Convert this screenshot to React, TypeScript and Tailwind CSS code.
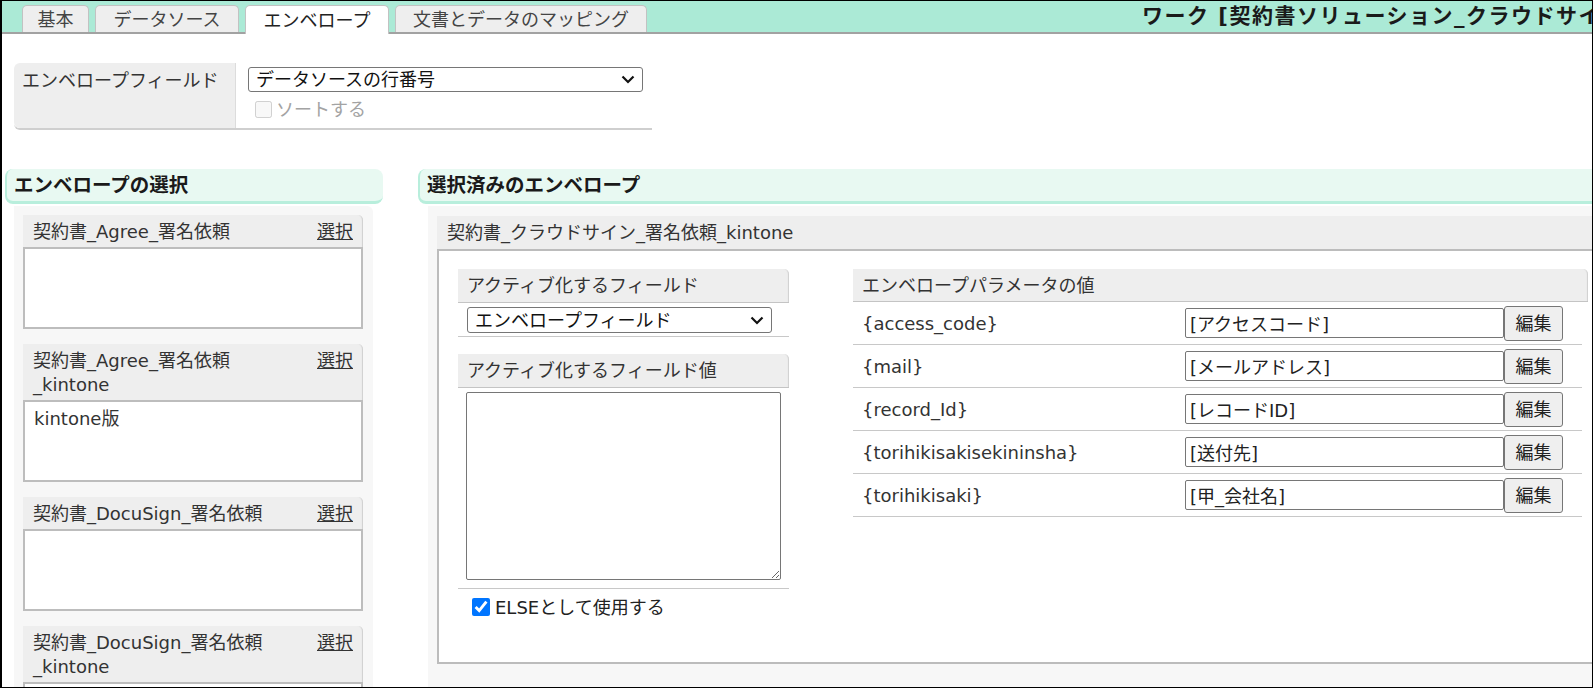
import React from 'react';

const tabs = [
  { label: '基本', width: 'w-[67px]', active: false },
  { label: 'データソース', width: 'w-[144px]', active: false },
  { label: 'エンベロープ', width: 'w-[144px]', active: true },
  { label: '文書とデータのマッピング', width: 'w-[252px]', active: false },
];

const envelopes = [
  { name: '契約書_Agree_署名依頼', note: '' },
  { name: '契約書_Agree_署名依頼_kintone', note: 'kintone版' },
  { name: '契約書_DocuSign_署名依頼', note: '' },
  { name: '契約書_DocuSign_署名依頼_kintone', note: '' },
];

const params = [
  { key: '{access_code}', value: '[アクセスコード]' },
  { key: '{mail}', value: '[メールアドレス]' },
  { key: '{record_Id}', value: '[レコードID]' },
  { key: '{torihikisakisekininsha}', value: '[送付先]' },
  { key: '{torihikisaki}', value: '[甲_会社名]' },
];

const Chevron = () => (
  <svg width="14" height="9" viewBox="0 0 14 9" className="shrink-0">
    <path d="M1.5 1.5 L7 7 L12.5 1.5" fill="none" stroke="#111" strokeWidth="2.2" />
  </svg>
);

const FakeSelect = ({ value, className }: { value: string; className: string }) => (
  <div
    className={`flex items-center justify-between bg-white border border-[#767676] rounded-[3px] pl-[7px] pr-[7px] text-[#111] ${className}`}
  >
    <span className="whitespace-nowrap">{value}</span>
    <Chevron />
  </div>
);

const SectionHeader = ({ title }: { title: string }) => (
  <div className="h-[35px] flex items-center bg-[#e8f9f2] border-l-2 border-b-[3px] border-[#b8eedc] rounded-[8px] pl-[7px] text-[19.5px] font-bold text-[#1a1a1a] whitespace-nowrap">
    {title}
  </div>
);

const SubHeader = ({ title, className = '' }: { title: string; className?: string }) => (
  <div
    className={`flex items-center bg-[#eeeeee] rounded-tr-[5px] border-b border-[#c4c4c4] pl-[9px] shadow-[inset_-2px_0_1px_-1px_#cfcfcf] ${className}`}
  >
    {title}
  </div>
);

export default function App() {
  return (
    <div className="w-[1593px] h-[688px] overflow-hidden bg-white border border-l-2 border-black text-[18px] leading-[25px] text-[#333] font-['DejaVu_Sans','Noto_Sans_CJK_JP',sans-serif]">
      <div className="w-[1700px]">
        {/* tab bar */}
        <div className="h-[33px] flex items-end gap-[6px] pl-[20px] bg-[#abead6] border-b-2 border-[#a2a2a2]">
          {tabs.map((t) => (
            <div
              key={t.label}
              className={`${t.width} flex items-center justify-center rounded-t-[5px] border border-b-0 border-[#c2c2c2] whitespace-nowrap ${
                t.active ? 'h-[29px] -mb-[2px] bg-white text-[#222] relative' : 'h-[27px] bg-[#eeeeee] text-[#444]'
              }`}
            >
              {t.label}
            </div>
          ))}
          <div className="self-center ml-[489px] text-[21px] tracking-[1.5px] font-bold text-[#1a1a1a] whitespace-nowrap">
            ワーク [契約書ソリューション_クラウドサイン]
          </div>
        </div>

        {/* envelope field */}
        <div className="mt-[29px] ml-[12px] w-[638px] flex border-b-2 border-[#cfcfcf] rounded-bl-[6px]">
          <div className="w-[222px] shrink-0 bg-[#eeeeee] rounded-l-[6px] border-r border-[#dcdcdc] px-[8px] pt-[5px]">
            エンベロープフィールド
          </div>
          <div className="flex-1 pl-[12px] pt-[4px] pb-[6px]">
            <FakeSelect value="データソースの行番号" className="w-[395px] h-[25px]" />
            <label className="flex items-center gap-[4px] mt-[5px] ml-[7px] text-[#a3a3a3]">
              <input type="checkbox" disabled className="w-[17px] h-[17px] m-0" />
              ソートする
            </label>
          </div>
        </div>

        {/* sections */}
        <div className="mt-[39px] flex">
          {/* left: envelope list */}
          <div className="ml-[3px] w-[378px] shrink-0">
            <SectionHeader title="エンベロープの選択" />
            <div className="mt-[2px] ml-[9px] w-[359px] bg-[#f7f7f7] rounded-tr-[6px] pt-[9px] pl-[9px] pr-[10px] pb-[40px] flex flex-col gap-[15px]">
              {envelopes.map((e) => (
                <div key={e.name}>
                  <div className="flex items-start justify-between gap-[8px] bg-[#eeeeee] rounded-tr-[5px] pl-[10px] pr-[10px] pt-[5px] pb-[3px] leading-[24px] shadow-[inset_-2px_0_1px_-1px_#cfcfcf]">
                    <span className="w-[250px]">{e.name}</span>
                    <span className="underline whitespace-nowrap">選択</span>
                  </div>
                  <div className="h-[82px] bg-white border-2 border-[#bdbdbd] px-[9px] pt-[4px]">{e.note}</div>
                </div>
              ))}
            </div>
          </div>

          {/* right: selected envelope */}
          <div className="ml-[35px] flex-1">
            <SectionHeader title="選択済みのエンベロープ" />
            <div className="mt-[2px] ml-[10px] bg-[#f7f7f7] pt-[10px] pl-[9px] pb-[40px]">
              <div className="h-[33px] flex items-center bg-[#eeeeee] pl-[10px] whitespace-nowrap">
                契約書_クラウドサイン_署名依頼_kintone
              </div>
              <div className="h-[415px] bg-white border-2 border-[#bcbcbc] pt-[18px] pl-[19px] flex gap-[64px]">
                {/* activation field */}
                <div className="w-[331px] shrink-0">
                  <SubHeader title="アクティブ化するフィールド" className="h-[34px]" />
                  <div className="pt-[4px] pb-[3px] pl-[9px] border-b border-[#c8c8c8]">
                    <FakeSelect value="エンベロープフィールド" className="w-[305px] h-[26px]" />
                  </div>
                  <SubHeader title="アクティブ化するフィールド値" className="mt-[17px] h-[34px]" />
                  <div className="pt-[4px] pb-[8px] pl-[8px] border-b border-[#c8c8c8]">
                    <textarea className="block w-[315px] h-[188px] bg-white border border-[#767676] rounded-[2px]" />
                  </div>
                  <label className="h-[36px] flex items-center gap-[5px] pl-[14px] text-[#222]">
                    <input type="checkbox" defaultChecked className="w-[18px] h-[18px] m-0 accent-[#0075ff]" />
                    ELSEとして使用する
                  </label>
                </div>

                {/* parameters */}
                <div className="w-[735px] shrink-0">
                  <SubHeader title="エンベロープパラメータの値" className="h-[33px]" />
                  <div className="mr-[6px]">
                    {params.map((p) => (
                      <div key={p.key} className="h-[43px] flex items-center border-b border-[#c8c8c8]">
                        <div className="w-[332px] shrink-0 pl-[9px] whitespace-nowrap">{p.key}</div>
                        <input
                          readOnly
                          value={p.value}
                          className="w-[319px] h-[30px] bg-white border border-[#767676] rounded-[2px] px-[4px] text-[#222]"
                        />
                        <button className="w-[59px] h-[35px] bg-[#efefef] border border-[#767676] rounded-[3px] text-[#222]">
                          編集
                        </button>
                      </div>
                    ))}
                  </div>
                </div>
              </div>
            </div>
          </div>
        </div>
      </div>
    </div>
  );
}
